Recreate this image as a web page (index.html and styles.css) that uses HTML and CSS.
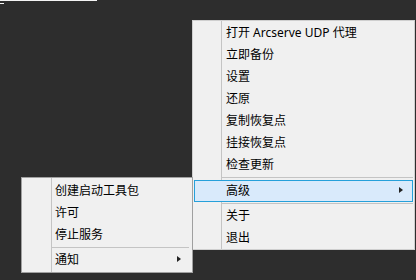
FILE: index.html
```html
<!DOCTYPE html>
<html lang="zh-CN">
<head>
<meta charset="utf-8">
<title>Arcserve UDP 托盘菜单</title>
<link rel="stylesheet" href="styles.css">
</head>
<body>
<div class="desktop">
  <div class="edge-line"></div>
  <div class="edge-dash"></div>

  <div class="menu menu-main">
    <div class="item">打开 Arcserve UDP 代理</div>
    <div class="item">立即备份</div>
    <div class="item">设置</div>
    <div class="item">还原</div>
    <div class="item">复制恢复点</div>
    <div class="item">挂接恢复点</div>
    <div class="item">检查更新</div>
    <div class="sep sep-a"></div>
    <div class="item item-sub active">高级<span class="arrow"></span></div>
    <div class="sep sep-b"></div>
    <div class="item">关于</div>
    <div class="item">退出</div>
  </div>

  <div class="menu menu-adv">
    <div class="item">创建启动工具包</div>
    <div class="item">许可</div>
    <div class="item">停止服务</div>
    <div class="sep sep-b"></div>
    <div class="item item-sub">通知<span class="arrow"></span></div>
  </div>
</div>
</body>
</html>
```

FILE: styles.css
```css
html, body {
  margin: 0;
  padding: 0;
}

body {
  width: 416px;
  height: 280px;
  overflow: hidden;
  background: #2d2d2d;
  font-family: "Noto Sans", "Noto Sans CJK SC", sans-serif;
  font-size: 12px;
  color: #000;
}

.desktop {
  position: relative;
  width: 416px;
  height: 280px;
}

.edge-line {
  width: 97px;
  height: 1px;
  background: #f4f4f4;
}

.edge-dash {
  width: 4px;
  height: 1px;
  margin-top: 2px;
  background: #f4f4f4;
}

.menu {
  position: absolute;
  box-sizing: border-box;
  display: flex;
  flex-direction: column;
  background-color: #f0f0f0;
  border: 1px solid #a0a0a0;
}

.menu-main {
  left: 192px;
  top: 20px;
  width: 223px;
  padding: 1px 1px 0 1px;
  border-color: #cfcfcf;
  background-image: linear-gradient(to right, transparent 28px, #c4c4c4 28px, #c4c4c4 29px, transparent 29px);
}

.menu-adv {
  left: 21px;
  top: 177px;
  width: 172px;
  height: 96px;
  padding: 2px 2px 1px 2px;
  background-image: linear-gradient(to right, transparent 29px, #c4c4c4 29px, #c4c4c4 30px, transparent 30px);
}

.item {
  box-sizing: border-box;
  position: relative;
  height: 22px;
  line-height: 20px;
  border: 1px solid transparent;
  white-space: nowrap;
}

.menu-main .item {
  padding-left: 31px;
}

.menu-adv .item {
  padding-left: 30px;
}

.item.active {
  background: #d9eafb;
  border-color: #26a0da;
}

.arrow {
  position: absolute;
  top: 6px;
  width: 0;
  height: 0;
  border-left: 4px solid #222;
  border-top: 3.5px solid transparent;
  border-bottom: 3.5px solid transparent;
}

.menu-main .arrow {
  right: 9px;
}

.menu-adv .arrow {
  right: 8px;
}

.sep {
  box-sizing: border-box;
  border-top: 1px solid #c4c4c4;
}

.menu-main .sep {
  margin-left: 27px;
}

.menu-adv .sep {
  margin-left: 27px;
  margin-right: 1px;
}

.sep-a {
  height: 3px;
  margin-top: 1px;
}

.sep-b {
  height: 2px;
  margin-top: 1px;
}
```
